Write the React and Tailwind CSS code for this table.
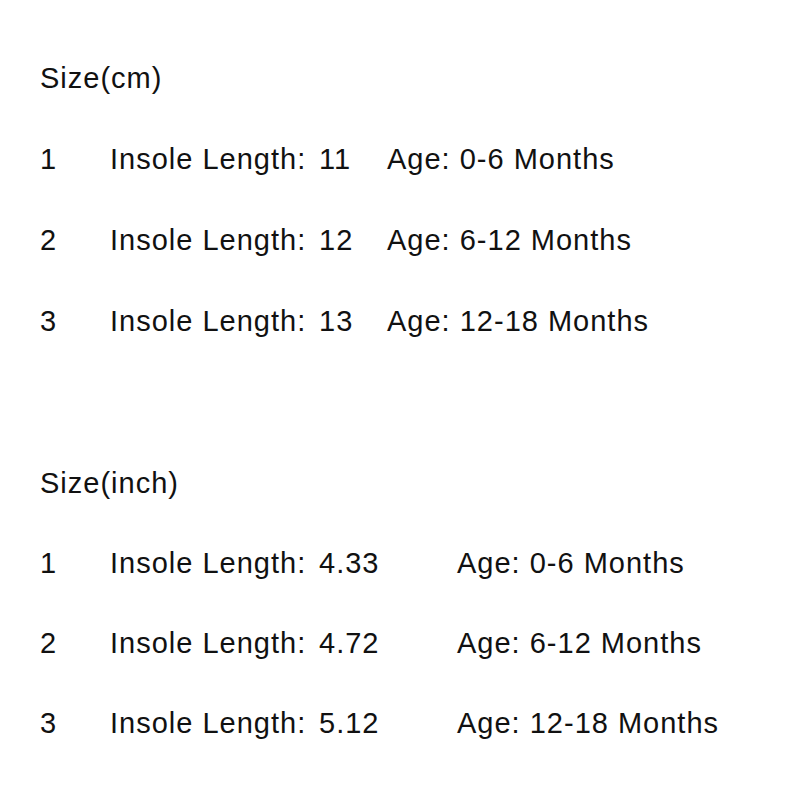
export default function App() {
  const cm = [
    ["1", "11", "Age: 0-6 Months"],
    ["2", "12", "Age: 6-12 Months"],
    ["3", "13", "Age: 12-18 Months"],
  ];
  const inch = [
    ["1", "4.33", "Age: 0-6 Months"],
    ["2", "4.72", "Age: 6-12 Months"],
    ["3", "5.12", "Age: 12-18 Months"],
  ];
  return (
    <div
      className="w-[800px] h-[800px] bg-white text-[#111] pt-[38px] pl-[40px] text-[29px] tracking-[1px]"
      style={{ fontFamily: '"Liberation Sans", Arial, sans-serif' }}
    >
      <div className="h-[81px] leading-[81px] whitespace-nowrap">Size(cm)</div>
      {cm.map((r) => (
        <div key={r[0]} className="flex h-[81px] leading-[81px] whitespace-nowrap">
          <span className="w-[70px]">{r[0]}</span>
          <span className="w-[209px]">Insole Length:</span>
          <span className="w-[68px]">{r[1]}</span>
          <span>{r[2]}</span>
        </div>
      ))}
      <div className="h-[81px]" />
      <div className="h-[80px] leading-[80px] whitespace-nowrap">Size(inch)</div>
      {inch.map((r) => (
        <div key={r[0]} className="flex h-[80px] leading-[80px] whitespace-nowrap">
          <span className="w-[70px]">{r[0]}</span>
          <span className="w-[209px]">Insole Length:</span>
          <span className="w-[138px]">{r[1]}</span>
          <span>{r[2]}</span>
        </div>
      ))}
    </div>
  );
}
